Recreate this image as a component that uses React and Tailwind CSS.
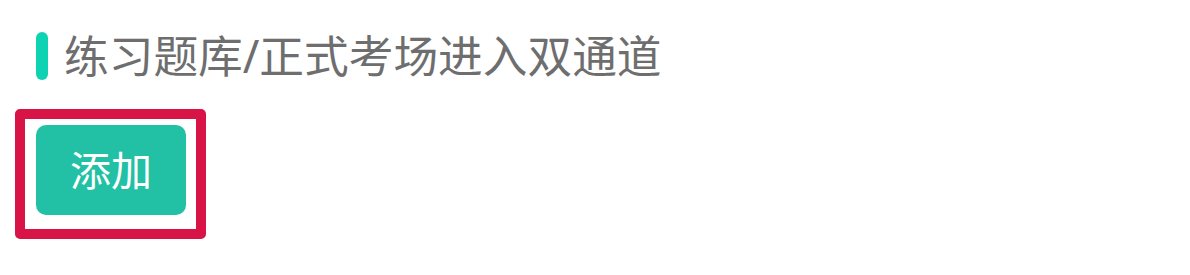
import React from 'react';

function SectionTitle({ children }) {
  return (
    <div className="flex items-center gap-4 pl-9 pt-8">
      <span className="block w-3 h-12 rounded-full bg-[#0dd3b2]" />
      <h2 className="text-[44.7px] leading-[48px] text-[#6e6e6e] font-normal">{children}</h2>
    </div>
  );
}

export default function App() {
  return (
    <div
      className="w-[1190px] h-[275px] bg-white"
      style={{ fontFamily: '"Noto Sans", "Noto Sans CJK SC", sans-serif' }}
    >
      <SectionTitle>练习题库/正式考场进入双通道</SectionTitle>
      <div className="ml-[15px] mt-[29px] w-[191px] h-[130px] border-[10px] border-[#d81446] rounded-[5px] pl-[11px] pt-[6px]">
        <button className="w-[150px] h-[90px] rounded-[10px] bg-[#22c0a4] text-white text-[41px] leading-none font-normal">
          添加
        </button>
      </div>
    </div>
  );
}
